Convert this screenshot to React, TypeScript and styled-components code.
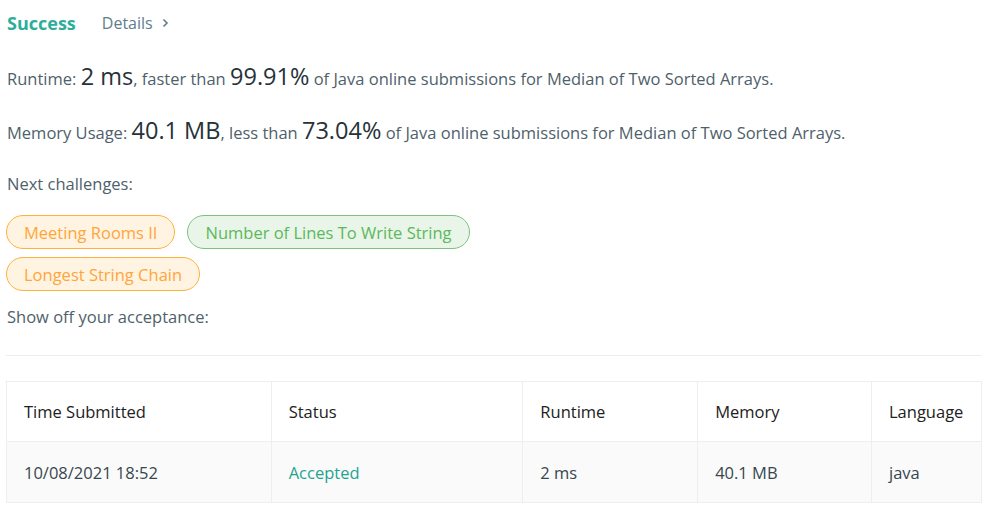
import React from 'react';
import styled, { createGlobalStyle } from 'styled-components';

const GlobalStyle = createGlobalStyle`
    body {
        margin: 0;
        background: #fff;
        font-family: "Open Sans", "Noto Sans", sans-serif;
        color: #546e7a;
    }
`

const Page = styled.div`
    padding: 10px 14px 0 6px;
    width: 976px;
`

const Header = styled.div`
    display: flex;
    align-items: center;
    height: 26px;
    padding-left: 1px;
    gap: 26px;
`

const SuccessTitle = styled.span`
    font-size: 18px;
    font-weight: 700;
    color: #2cae9a;
`

const DetailsLink = styled.span`
    font-size: 16px;
    color: #607d8b;
    display: flex;
    align-items: center;
    gap: 9px;
`

const Line = styled.div<{ $top: number }>`
    margin-top: ${p => p.$top}px;
    padding-left: 1px;
    font-size: 16.5px;
    color: #4f5f6b;
    line-height: 24px;
    white-space: nowrap;
`

const Big = styled.span`
    font-size: 23.5px;
    color: #263238;
`

const Pills = styled.div`
    display: flex;
    flex-wrap: wrap;
    gap: 8px 12px;
    margin-top: 19px;
    width: 500px;
`

const Pill = styled.span<{ $tone: 'orange' | 'green' }>`
    display: inline-flex;
    align-items: center;
    height: 34px;
    box-sizing: border-box;
    padding: 0 17px;
    border-radius: 17px;
    font-size: 16.5px;
    border: 1px solid ${p => p.$tone === 'orange' ? '#ffb13d' : '#7cc47f'};
    background: ${p => p.$tone === 'orange' ? '#fff3e2' : '#e8f5e8'};
    color: ${p => p.$tone === 'orange' ? '#ffa53a' : '#5cb85c'};
`

const Divider = styled.hr`
    border: none;
    border-top: 1px solid #eeeeee;
    margin: 26px 0 0;
`

const Table = styled.table`
    margin-top: 25px;
    width: 976px;
    border-collapse: collapse;
    font-size: 16.5px;
`

const Th = styled.th<{ $w: number }>`
    width: ${p => p.$w}px;
    height: 60px;
    padding: 0 17px;
    text-align: left;
    font-weight: 400;
    color: #212121;
    border: 1px solid #eeeeee;
    box-sizing: border-box;
`

const Td = styled.td<{ $ok?: boolean }>`
    height: 60px;
    padding: 0 17px;
    color: ${p => p.$ok ? '#1fa392' : '#37474f'};
    background: #fafafa;
    border: 1px solid #eeeeee;
`

function Chevron() {
    return (
        <svg width="7" height="10" viewBox="0 0 7 10">
            <path d="M1.5 1.5 L5 5 L1.5 8.5" fill="none" stroke="#607d8b" strokeWidth="1.6" />
        </svg>
    );
}

const challenges: { name: string; tone: 'orange' | 'green' }[] = [
    { name: 'Meeting Rooms II', tone: 'orange' },
    { name: 'Number of Lines To Write String', tone: 'green' },
    { name: 'Longest String Chain', tone: 'orange' },
];

const columns = [
    { title: 'Time Submitted', w: 265 },
    { title: 'Status', w: 252 },
    { title: 'Runtime', w: 175 },
    { title: 'Memory', w: 174 },
    { title: 'Language', w: 110 },
];

function App() {
    return (
        <Page>
            <GlobalStyle />
            <Header>
                <SuccessTitle>Success</SuccessTitle>
                <DetailsLink>Details <Chevron /></DetailsLink>
            </Header>
            <Line $top={28}>
                Runtime: <Big>2 ms</Big>, faster than <Big>99.91%</Big> of Java online submissions for Median of Two Sorted Arrays.
            </Line>
            <Line $top={27}>
                Memory Usage: <Big>40.1 MB</Big>, less than <Big>73.04%</Big> of Java online submissions for Median of Two Sorted Arrays.
            </Line>
            <Line $top={27}>Next challenges:</Line>
            <Pills>
                {challenges.map(c => (
                    <Pill key={c.name} $tone={c.tone}>{c.name}</Pill>
                ))}
            </Pills>
            <Line $top={14}>Show off your acceptance:</Line>
            <Divider />
            <Table>
                <thead>
                    <tr>
                        {columns.map(c => <Th key={c.title} $w={c.w}>{c.title}</Th>)}
                    </tr>
                </thead>
                <tbody>
                    <tr>
                        <Td>10/08/2021 18:52</Td>
                        <Td $ok>Accepted</Td>
                        <Td>2 ms</Td>
                        <Td>40.1 MB</Td>
                        <Td>java</Td>
                    </tr>
                </tbody>
            </Table>
        </Page>
    );
}

export default App;
